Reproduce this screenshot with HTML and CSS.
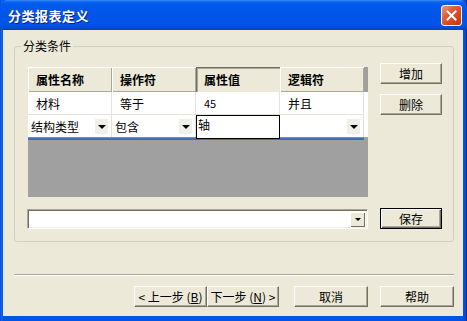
FILE: index.html
```html
<!DOCTYPE html>
<html lang="zh-CN">
<head>
    <meta charset="UTF-8">
    <title>分类报表定义</title>
    <link rel="stylesheet" href="styles.css">
</head>
<body>
    <div class="window">
        <div class="titlebar">
            <span class="title">分类报表定义</span>
            <button class="close-btn">
                <svg width="11" height="11" viewBox="0 0 11 11">
                    <path d="M1.5 1.5 L9.5 9.5 M9.5 1.5 L1.5 9.5" stroke="#fff" stroke-width="2" stroke-linecap="square"/>
                </svg>
            </button>
        </div>

        <div class="client">
            <fieldset class="group">
                <legend>分类条件</legend>

                <div class="group-top">
                    <div class="grid">
                        <div class="grid-head">
                            <div class="hcell">属性名称</div>
                            <div class="hcell">操作符</div>
                            <div class="hcell pressed">属性值</div>
                            <div class="hcell">逻辑符</div>
                        </div>
                        <div class="grid-row">
                            <div class="cell">材料</div>
                            <div class="cell">等于</div>
                            <div class="cell num">45</div>
                            <div class="cell">并且</div>
                        </div>
                        <div class="grid-row edit-row">
                            <div class="cell combo-cell">结构类型<span class="drop"></span></div>
                            <div class="cell combo-cell">包含<span class="drop"></span></div>
                            <div class="cell editor">轴</div>
                            <div class="cell combo-cell"><span class="drop"></span></div>
                        </div>
                        <div class="row-line"></div>
                    </div>

                    <div class="side-buttons">
                        <button class="btn">增加</button>
                        <button class="btn">删除</button>
                    </div>
                </div>

                <div class="group-bottom">
                    <div class="combo">
                        <span class="combo-text"></span>
                        <span class="combo-btn"><span class="drop-arrow"></span></span>
                    </div>
                    <button class="btn default">保存</button>
                </div>
            </fieldset>

            <div class="separator"></div>

            <div class="footer">
                <div class="wizard-nav">
                    <button class="btn prev">&lt; 上一步 (<u>B</u>)</button>
                    <button class="btn next">下一步 (<u>N</u>) &gt;</button>
                </div>
                <button class="btn wide">取消</button>
                <button class="btn wide">帮助</button>
            </div>
        </div>
    </div>
</body>
</html>
```

FILE: styles.css
```css
body {
    margin: 0;
    background-color: #0054e3;
    font-family: "Noto Sans CJK SC", "Liberation Sans", sans-serif;
    font-size: 12px;
    color: #000;
    overflow: hidden;
}

.window {
    width: 467px;
    height: 321px;
    display: flex;
    flex-direction: column;
    background: linear-gradient(to right, #0831d9 0, #166aee 1px, #0055e5 3px, #0055e5 462px, #0b48c8 466px, #00138c 467px);
}

.titlebar {
    height: 30px;
    display: flex;
    align-items: center;
    justify-content: space-between;
    padding: 0 5px 0 8px;
    background: linear-gradient(to bottom, #3d8ff9 0, #0a62f0 2px, #0058ee 6px, #0055e6 16px, #0056ea 24px, #004bd2 28px, #0040b8 30px);
    border-radius: 7px 7px 0 0;
}

.title {
    color: #fff;
    font-weight: bold;
    font-size: 13px;
    letter-spacing: 0.5px;
    text-shadow: 1px 1px 0 #0a1e8c;
}

.close-btn {
    width: 21px;
    height: 21px;
    padding: 0;
    margin-top: 1px;
    border: 1px solid #fff;
    border-radius: 3px;
    background: linear-gradient(135deg, #f09a7c 0, #e35f3c 35%, #d5431c 70%, #c53810 100%);
    display: flex;
    align-items: center;
    justify-content: center;
}

.client {
    flex: 1;
    margin: 0 4px 5px 3px;
    background-color: #ece9d8;
    padding: 9px 9px 0 11px;
    display: flex;
    flex-direction: column;
}

.group {
    margin: 0;
    padding: 10px 10px 12px 13px;
    border: 1px solid #d0d0bf;
    border-radius: 3px;
    min-width: 0;
}

.group legend {
    margin-left: -7px;
    padding: 0 2px;
    line-height: 14px;
    height: 14px;
}

.group-top {
    display: flex;
    gap: 12px;
    align-items: flex-start;
}

.grid {
    margin-top: 4px;
    width: 340px;
    height: 130px;
    background-color: #a0a0a0;
    display: flex;
    flex-direction: column;
}

.grid-head,
.grid-row {
    display: grid;
    grid-template-columns: repeat(4, 84px);
}

.hcell {
    height: 25px;
    line-height: 25px;
    padding-left: 8px;
    font-weight: bold;
    background-color: #ece9d8;
    box-shadow: inset 1px 1px 0 #fff, inset -1px -1px 0 #aca899;
    box-sizing: border-box;
}

.hcell.pressed {
    box-shadow: inset 1px 1px 0 #716f64, inset 2px 2px 0 #aca899;
}

.grid-row {
    background-color: #fff;
}

.cell {
    height: 23px;
    line-height: 23px;
    padding-left: 8px;
    background-color: #fff;
    border-right: 1px solid #e4e2da;
    border-bottom: 1px solid #e4e2da;
    box-sizing: border-box;
    white-space: nowrap;
}

.cell.num {
    font-size: 11px;
}

.edit-row .cell {
    height: 22px;
    line-height: 21px;
    border-bottom: none;
}

.combo-cell {
    display: flex;
    align-items: center;
    padding-left: 3px;
    padding-right: 3px;
}

.drop {
    width: 13px;
    height: 15px;
    margin-left: auto;
    background-color: #f0efe8;
    position: relative;
}

.drop::after {
    content: "";
    position: absolute;
    left: 3px;
    top: 6px;
    border-left: 4px solid transparent;
    border-right: 4px solid transparent;
    border-top: 4px solid #000;
}

.edit-row .cell.editor {
    border: 1px solid #000;
    height: 24px;
    line-height: 18px;
    padding-left: 1px;
    margin-bottom: -2px;
    position: relative;
    z-index: 1;
}

.row-line {
    width: 336px;
    height: 3px;
    background: linear-gradient(to bottom, #9db4dc 0, #3e6db8 1px, #3e6db8 3px);
}

.side-buttons {
    display: flex;
    flex-direction: column;
    gap: 10px;
}

.btn {
    width: 62px;
    height: 21px;
    padding: 0;
    font-family: inherit;
    font-size: 12px;
    color: #000;
    background-color: #ece9d8;
    border: 1px solid;
    border-color: #fff #716f64 #716f64 #fff;
    box-shadow: inset -1px -1px 0 #aca899;
    white-space: nowrap;
}

.btn.default {
    border: 1px solid #000;
    box-shadow: inset 1px 1px 0 #fff, inset -1px -1px 0 #716f64, inset -2px -2px 0 #aca899;
}

.group-bottom {
    display: flex;
    gap: 12px;
    align-items: flex-end;
    margin-top: 11px;
}

.combo {
    width: 341px;
    height: 20px;
    margin-left: -1px;
    box-sizing: border-box;
    background-color: #fff;
    border: 1px solid;
    border-color: #aca899 #fff #fff #aca899;
    box-shadow: inset 1px 1px 0 #716f64, inset -1px -1px 0 #f1efe2;
    display: flex;
    justify-content: flex-end;
    align-items: center;
    padding-right: 2px;
}

.combo-btn {
    width: 15px;
    height: 15px;
    background-color: #ece9d8;
    box-shadow: inset 1px 1px 0 #fff, inset -1px -1px 0 #716f64;
    display: flex;
    align-items: center;
    justify-content: center;
}

.drop-arrow {
    border-left: 3px solid transparent;
    border-right: 3px solid transparent;
    border-top: 3px solid #000;
    margin-top: 1px;
}

.separator {
    margin-top: 32px;
    border-top: 1px solid #aca899;
    border-bottom: 1px solid #fff;
}

.footer {
    margin-top: 10px;
    display: flex;
    justify-content: flex-end;
    gap: 12px;
}

.wizard-nav {
    display: flex;
    margin-right: 3px;
}

.btn.prev {
    width: 73px;
}

.btn.next {
    width: 72px;
}

.btn.wide {
    width: 74px;
}
```
